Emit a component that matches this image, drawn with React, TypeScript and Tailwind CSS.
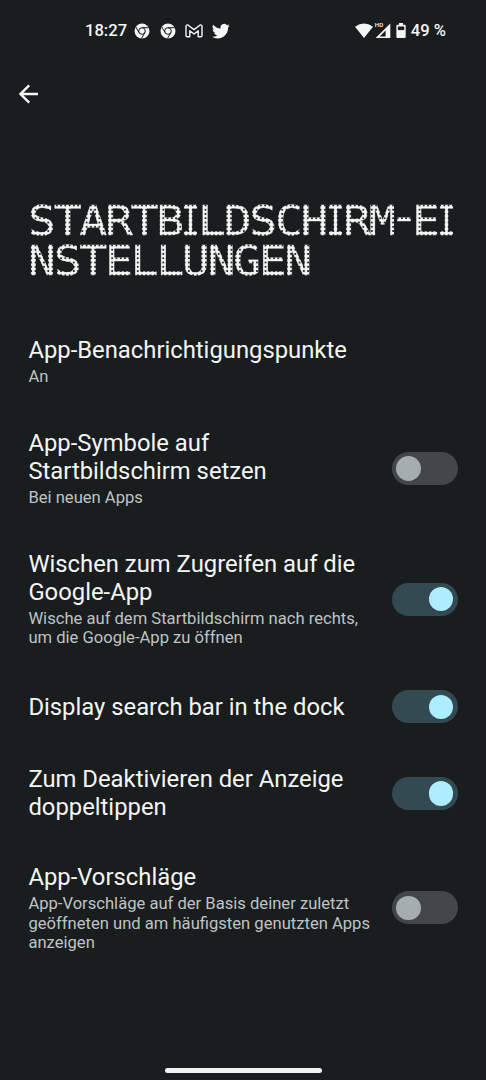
import React from 'react';

const settings = [
  {
    title: ['App-Benachrichtigungspunkte'],
    summary: ['An'],
    className: 'mb-[43px]',
  },
  {
    title: ['App-Symbole auf', 'Startbildschirm setzen'],
    summary: ['Bei neuen Apps'],
    checked: false,
    className: 'mb-[43px]',
  },
  {
    title: ['Wischen zum Zugreifen auf die', 'Google-App'],
    summary: ['Wische auf dem Startbildschirm nach rechts,', 'um die Google-App zu öffnen'],
    checked: true,
    className: 'mb-[42.6px]',
  },
  {
    title: ['Display search bar in the dock'],
    summary: [],
    checked: true,
    className: 'mb-[42px]',
  },
  {
    title: ['Zum Deaktivieren der Anzeige', 'doppeltippen'],
    summary: [],
    checked: true,
    className: 'mb-[42px]',
  },
  {
    title: ['App-Vorschläge'],
    summary: ['App-Vorschläge auf der Basis deiner zuletzt', 'geöffneten und am häufigsten genutzten Apps', 'anzeigen'],
    checked: false,
    className: '',
  },
];

const ChromeIcon = () => (
  <svg className="h-4 w-4" viewBox="0 0 16 16" fill="none">
    <circle cx="8" cy="8" r="7.5" fill="#f4f5f5" />
    <circle cx="8" cy="8" r="3.3" stroke="#191d1e" strokeWidth="1" />
    <path d="M8 4.7h6.7M5.1 9.6 1.8 4M10.9 9.6 7.6 15.3" stroke="#191d1e" strokeWidth="1" />
  </svg>
);

const GmailIcon = () => (
  <svg className="h-[14px] w-[18px]" viewBox="0 0 18 14" fill="none" stroke="#f4f5f5" strokeWidth="1.4" strokeLinejoin="round">
    <path d="M1 2.2v9.3c0 .8.5 1.3 1.2 1.3h2.6V6.8L9 10l4.2-3.2v6h2.6c.7 0 1.2-.5 1.2-1.3V2.2c0-1.2-1.3-1.6-2.2-1L9 5.6 3.2 1.2C2.3.6 1 1 1 2.2Z" />
  </svg>
);

const TwitterIcon = () => (
  <svg className="h-[18px] w-[18px]" viewBox="0 0 24 24" fill="#f4f5f5">
    <path d="M23.6 4.9a9.7 9.7 0 0 1-2.8.8 4.9 4.9 0 0 0 2.1-2.7 9.8 9.8 0 0 1-3.1 1.2 4.8 4.8 0 0 0-8.3 4.4A13.8 13.8 0 0 1 1.6 3.5a4.8 4.8 0 0 0 1.5 6.5 4.9 4.9 0 0 1-2.2-.6 4.9 4.9 0 0 0 3.9 4.8 4.9 4.9 0 0 1-2.2.1 4.9 4.9 0 0 0 4.5 3.4A9.8 9.8 0 0 1 0 19.7a13.8 13.8 0 0 0 7.5 2.2c9.1 0 14.3-7.7 13.9-14.6a9.9 9.9 0 0 0 2.2-2.4Z" />
  </svg>
);

const StatusBar = () => (
  <header className="flex h-[62px] items-center pl-[85px] pr-[40px] text-[16.6px] font-medium leading-5">
    <span className="w-[49px]">18:27</span>
    <div className="flex items-center">
      <ChromeIcon />
      <span className="w-[10px]" />
      <ChromeIcon />
      <span className="w-[9px]" />
      <GmailIcon />
      <span className="w-[9px]" />
      <TwitterIcon />
    </div>
    <div className="ml-auto flex items-center">
      <svg className="h-[18px] w-[52px]" viewBox="0 0 52 18" fill="#f4f5f5">
        <path d="M0 4.7Q9 -1.8 18 4.7L9 16Z" />
        <path d="M35.3 1.6v14.4H20.6Z" />
        <path d="M30.6 8.6v5.8h-5.9Z" fill="#191d1e" />
        <text x="19.8" y="5.3" fontSize="6.2" fontFamily="Roboto, sans-serif">HD</text>
        <path d="M44 1h4v1.7h1.7q1 0 1 1v11.4q0 1-1 1h-7.3q-1 0-1-1V3.7q0-1 1-1h1.6Z" />
        <path d="M42.9 4.5h6.3v3.6h-6.3Z" fill="#191d1e" />
      </svg>
      <span className="ml-[4px]">49 %</span>
    </div>
  </header>
);

// Letters showing through a grid of round dots, 4.27px apart.
// Narrow glyphs (I, hyphen) get their own horizontal scale.
const Dots: React.FC<{ text: string; width: string; kind?: 'wide' | 'narrow' | 'dash' }> = ({ text, width, kind = 'wide' }) => (
  <span className={`block h-[40.4px] shrink-0 ${width}`}>
    <span
      className={`block h-[40.4px] w-max origin-left whitespace-pre bg-clip-text text-[40px] text-transparent bg-[radial-gradient(closest-side,#f4f5f5_88%,#f4f5f500_115%)] [-webkit-text-stroke:0.4px_transparent] ${
        kind === 'wide'
          ? "font-['DejaVu_Sans_Mono',monospace] leading-[40.4px] tracking-[-1.99px] scale-x-[1.16] bg-[length:3.681px_4.28px] bg-[position:2.81px_4.45px]"
          : kind === 'narrow'
            ? "font-['DejaVu_Sans_Mono',monospace] leading-[40.4px] scale-x-[0.79] bg-[length:5.405px_4.28px] bg-[position:9.34px_4.45px]"
            : "font-['DejaVu_Sans',sans-serif] leading-[33px] scale-x-[1.25] bg-[length:3.416px_4.28px] bg-[position:5.51px_4.45px]"
      }`}
    >
      {text}
    </span>
  </span>
);

const Title = () => (
  <h1 className="mt-[75px] ml-[27.5px]">
    <span className="flex">
      <Dots text="STARTB" width="w-[153.7px]" />
      <Dots text="I" width="w-[17.1px]" kind="narrow" />
      <Dots text="LDSCH" width="w-[128.1px]" />
      <Dots text="I" width="w-[17.1px]" kind="narrow" />
      <Dots text="RM" width="w-[51.2px]" />
      <Dots text="-" width="w-[17.1px]" kind="dash" />
      <Dots text="E" width="w-[25.6px]" />
      <Dots text="I" width="w-[17.1px]" kind="narrow" />
    </span>
    <span className="flex">
      <Dots text="NSTELLUNGEN" width="w-[282px]" />
    </span>
  </h1>
);

const Toggle: React.FC<{ checked: boolean }> = ({ checked }) => (
  <button
    role="switch"
    aria-checked={checked}
    className={`flex h-[33px] w-[66px] shrink-0 items-center rounded-full pl-[4px] pr-[4.6px] ${
      checked ? 'justify-end bg-[#344a52]' : 'justify-start bg-[#444749]'
    }`}
  >
    <span className={`h-[24.5px] w-[24.5px] rounded-full ${checked ? 'bg-[#aeecff]' : 'bg-[#a5adb0]'}`} />
  </button>
);

const App: React.FC = () => {
  return (
    <div className="flex h-[1080px] w-[486px] flex-col overflow-hidden bg-[#191d1e] font-[Roboto,sans-serif] text-[#f4f5f5]">
      <StatusBar />
      <nav className="flex h-[64px] items-center pl-[19px]">
        <svg className="h-[20px] w-[20px]" viewBox="0 0 20 20" fill="none" stroke="#f4f5f5" strokeWidth="2.4">
          <path d="M19 10H2M10.2 1.3 1.5 10l8.7 8.7" />
        </svg>
      </nav>
      <Title />
      <main className="mt-[54.4px] flex flex-1 flex-col pl-[28.4px] pr-[28px]">
        {settings.map((item) => (
          <section key={item.title[0]} className={`flex items-center justify-between ${item.className}`}>
            <div>
              <h2 className="text-[23.82px] leading-[28px]">
                {item.title.map((line) => (
                  <span key={line} className="block whitespace-nowrap">{line}</span>
                ))}
              </h2>
              {item.summary.length > 0 && (
                <p className="mt-[2.7px] text-[16.6px] leading-[19.4px] text-[#bfc3c4]">
                  {item.summary.map((line) => (
                    <span key={line} className="block whitespace-nowrap">{line}</span>
                  ))}
                </p>
              )}
            </div>
            {item.checked !== undefined && <Toggle checked={item.checked} />}
          </section>
        ))}
      </main>
      <footer className="flex h-[12px] justify-center">
        <div className="h-[5px] w-[157px] rounded-full bg-[#f1f1f1]" />
      </footer>
    </div>
  );
};

export default App;
